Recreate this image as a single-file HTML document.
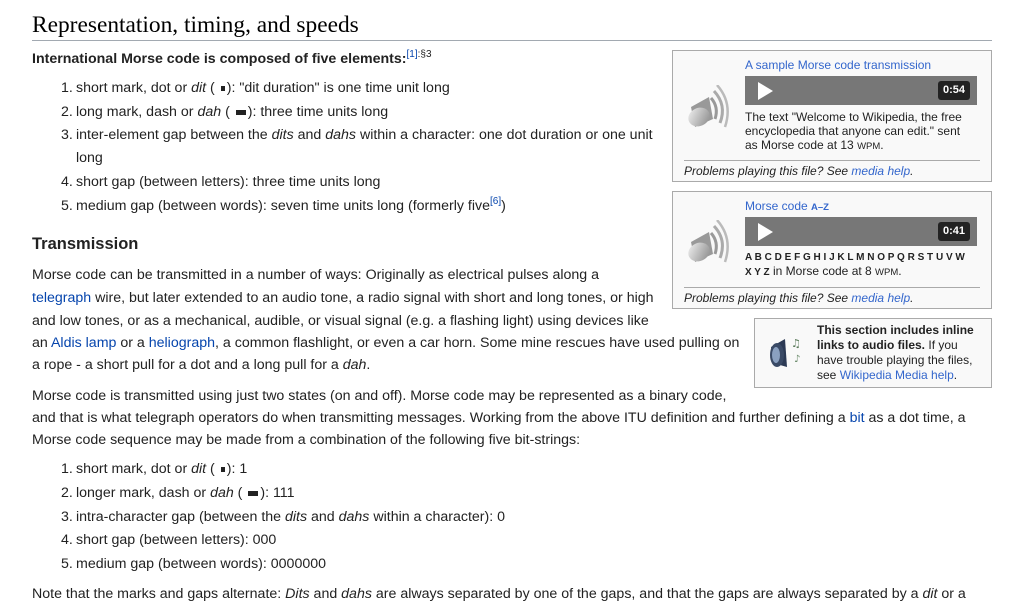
<!DOCTYPE html>
<html><head><meta charset="utf-8"><style>
body{margin:0;width:1018px;height:606px;overflow:hidden;background:#fff;font-family:"Liberation Sans",sans-serif;color:#222;position:relative}
.l{position:absolute;left:32px;white-space:nowrap;font-size:14.2px;line-height:20px;height:20px}
.n{left:61px}
.t{left:76px}
a{color:#0645ad;text-decoration:none}
sup{font-size:10px;line-height:0;vertical-align:6px}
.dot{display:inline-block;width:4px;height:5px;background:#222;vertical-align:1px;margin:0 2px}
.dash{display:inline-block;width:10px;height:5px;background:#222;vertical-align:1px;margin:0 2px}
.box{position:absolute;background:#f9f9f9;border:1px solid #aaa;box-sizing:border-box}
.bar{position:absolute;left:72px;width:232px;height:29px;background:#777}
.play{position:absolute;left:13px;top:6px;width:0;height:0;border-top:9px solid transparent;border-bottom:9px solid transparent;border-left:15px solid #fff}
.time{position:absolute;right:7px;top:5px;background:#222;color:#fff;font-weight:bold;font-size:11px;line-height:19px;padding:0 5px;border-radius:3px}
.s{font-size:12px;line-height:14px;position:absolute;white-space:nowrap}
.sc{font-size:9.5px}
</style></head><body>
<div style="position:absolute;left:32px;top:10px;font-family:'Liberation Serif',serif;font-size:23.4px;line-height:30px;color:#000">Representation, timing, and speeds</div>
<div style="position:absolute;left:32px;top:40px;width:960px;height:1px;background:#a2a9b1"></div>
<div class="l" style="top:49px;font-weight:bold">International Morse code is composed of five elements:<sup style="font-weight:normal"><a>[1]</a>:§3</sup></div>
<div class="l n" style="top:78px">1.</div><div class="l t" style="top:78px">short mark, dot or <i>dit</i> ( <span class="dot"></span>): "dit duration" is one time unit long</div>
<div class="l n" style="top:102px">2.</div><div class="l t" style="top:102px">long mark, dash or <i>dah</i> ( <span class="dash"></span>): three time units long</div>
<div class="l n" style="top:125px">3.</div><div class="l t" style="top:125px">inter-element gap between the <i>dits</i> and <i>dahs</i> within a character: one dot duration or one unit</div>
<div class="l t" style="top:148px">long</div>
<div class="l n" style="top:172px">4.</div><div class="l t" style="top:172px">short gap (between letters): three time units long</div>
<div class="l n" style="top:196px">5.</div><div class="l t" style="top:196px">medium gap (between words): seven time units long (formerly five<sup><a>[6]</a></sup>)</div>
<div class="l" style="top:233px;font-size:16.5px;font-weight:bold;line-height:22px">Transmission</div>
<div class="l" style="top:265px">Morse code can be transmitted in a number of ways: Originally as electrical pulses along a</div>
<div class="l" style="top:288px"><a>telegraph</a> wire, but later extended to an audio tone, a radio signal with short and long tones, or high</div>
<div class="l" style="top:311px">and low tones, or as a mechanical, audible, or visual signal (e.g. a flashing light) using devices like</div>
<div class="l" style="top:333px">an <a>Aldis lamp</a> or a <a>heliograph</a>, a common flashlight, or even a car horn. Some mine rescues have used pulling on</div>
<div class="l" style="top:355px">a rope - a short pull for a dot and a long pull for a <i>dah</i>.</div>
<div class="l" style="top:386px">Morse code is transmitted using just two states (on and off). Morse code may be represented as a binary code,</div>
<div class="l" style="top:408px">and that is what telegraph operators do when transmitting messages. Working from the above ITU definition and further defining a <a>bit</a> as a dot time, a</div>
<div class="l" style="top:430px">Morse code sequence may be made from a combination of the following five bit-strings:</div>
<div class="l n" style="top:459px">1.</div><div class="l t" style="top:459px">short mark, dot or <i>dit</i> ( <span class="dot"></span>): 1</div>
<div class="l n" style="top:483px">2.</div><div class="l t" style="top:483px">longer mark, dash or <i>dah</i> ( <span class="dash"></span>): 111</div>
<div class="l n" style="top:507px">3.</div><div class="l t" style="top:507px">intra-character gap (between the <i>dits</i> and <i>dahs</i> within a character): 0</div>
<div class="l n" style="top:530px">4.</div><div class="l t" style="top:530px">short gap (between letters): 000</div>
<div class="l n" style="top:554px">5.</div><div class="l t" style="top:554px">medium gap (between words): 0000000</div>
<div class="l" style="top:584px">Note that the marks and gaps alternate: <i>Dits</i> and <i>dahs</i> are always separated by one of the gaps, and that the gaps are always separated by a <i>dit</i> or a</div>

<svg width="0" height="0" style="position:absolute"><defs>
<linearGradient id="g" x1="0" y1="0" x2="1" y2="1"><stop offset="0" stop-color="#f2f2f2"/><stop offset="1" stop-color="#8a8a8a"/></linearGradient></defs></svg>

<div class="box" style="left:672px;top:50px;width:320px;height:132px">
<svg style="position:absolute;left:14px;top:34px" width="46" height="46" viewBox="0 0 46 46"><path d="M4 22 L22 12 L26 34 L8 42 Z" fill="#999"/><ellipse cx="12" cy="32" rx="11" ry="9" transform="rotate(-25 12 32)" fill="url(#g)"/><path d="M24 13 Q32 22 28 34" stroke="#999" stroke-width="3" fill="none"/><path d="M27 6 Q40 20 33 38" stroke="#aaa" stroke-width="3" fill="none"/><path d="M30 0 Q46 18 38 42" stroke="#bbb" stroke-width="2.5" fill="none"/></svg>
<div class="s" style="left:72px;top:7px;color:#3366cc">A sample Morse code transmission</div>
<div class="bar" style="top:25px"><div class="play"></div><div class="time">0:54</div></div>
<div class="s" style="left:72px;top:59px;color:#222">The text "Welcome to Wikipedia, the free<br>encyclopedia that anyone can edit." sent<br>as Morse code at 13 <span class="sc">WPM</span>.</div>
<div style="position:absolute;left:11px;top:109px;width:296px;height:1px;background:#aaa"></div>
<div class="s" style="left:11px;top:113px;font-style:italic">Problems playing this file? See <a style="color:#3366cc">media help</a>.</div>
</div>

<div class="box" style="left:672px;top:191px;width:320px;height:118px">
<svg style="position:absolute;left:14px;top:28px" width="46" height="46" viewBox="0 0 46 46"><path d="M4 22 L22 12 L26 34 L8 42 Z" fill="#999"/><ellipse cx="12" cy="32" rx="11" ry="9" transform="rotate(-25 12 32)" fill="url(#g)"/><path d="M24 13 Q32 22 28 34" stroke="#999" stroke-width="3" fill="none"/><path d="M27 6 Q40 20 33 38" stroke="#aaa" stroke-width="3" fill="none"/><path d="M30 0 Q46 18 38 42" stroke="#bbb" stroke-width="2.5" fill="none"/></svg>
<div class="s" style="left:72px;top:7px;color:#3366cc">Morse code <b class="sc">A–Z</b></div>
<div class="bar" style="top:25px"><div class="play"></div><div class="time">0:41</div></div>
<div class="s" style="left:72px;top:59px;color:#222;font-size:10px;font-weight:bold">A B C D E F G H I J K L M N O P Q R S T U V W</div>
<div class="s" style="left:72px;top:72px;color:#222"><b style="font-size:10px">X Y Z</b> in Morse code at 8 <span class="sc">WPM</span>.</div>
<div style="position:absolute;left:11px;top:95px;width:296px;height:1px;background:#aaa"></div>
<div class="s" style="left:11px;top:99px;font-style:italic">Problems playing this file? See <a style="color:#3366cc">media help</a>.</div>
</div>

<div class="box" style="left:754px;top:318px;width:238px;height:70px">
<svg style="position:absolute;left:12px;top:14px" width="40" height="40" viewBox="0 0 40 40"><path d="M4 14 L18 6 L20 34 L6 30 Z" fill="#2c3a55"/><ellipse cx="10" cy="22" rx="7" ry="12" fill="#3a4a66"/><ellipse cx="9" cy="22" rx="4" ry="8" fill="#8aa0c0"/><text x="24" y="14" font-size="11" fill="#5a7a5a" font-family="DejaVu Sans">♫</text><text x="27" y="29" font-size="10" fill="#6a8a6a" font-family="DejaVu Sans">♪</text></svg>
<div class="s" style="left:62px;top:4px;line-height:15px;color:#222"><b>This section includes inline<br>links to audio files.</b> If you<br>have trouble playing the files,<br>see <a style="color:#3366cc">Wikipedia Media help</a>.</div>
</div>
</body></html>
